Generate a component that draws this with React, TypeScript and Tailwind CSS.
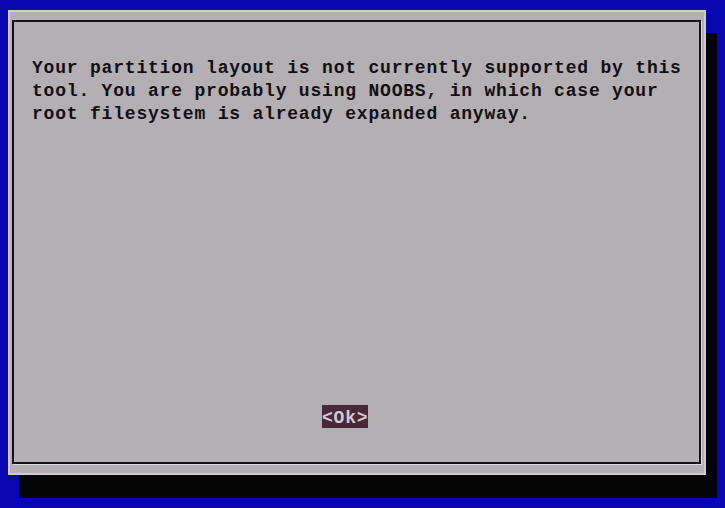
export default function App() {
  const lines = [
    "Your partition layout is not currently supported by this",
    "tool. You are probably using NOOBS, in which case your",
    "root filesystem is already expanded anyway.",
  ];

  return (
    <div className="w-[725px] h-[508px] bg-[#0808b0] pl-[8px] pt-[10px] overflow-hidden font-['Liberation_Mono',monospace] font-bold">
      <div className="w-[698px] h-[465px] bg-[#b3afb3] border-2 border-[#cfcbcf] shadow-[11px_23px_0_#050505] pl-[2px] pt-[8px]">
        <div className="w-[689px] h-[444px] border-2 border-[#151115] shadow-[1px_1px_0_#dedade] flex flex-col pl-[18px] pt-[35px]">
          <div className="text-[18px] leading-[23px] tracking-[0.8px] text-[#120e12]">
            {lines.map((l, i) => (
              <div key={i} className="whitespace-pre">
                {l}
              </div>
            ))}
          </div>
          <div className="mt-[279px] ml-[290px]">
            <span className="inline-block h-[23px] w-[46px] bg-[#4a2838] text-[#d2cad2] text-[18px] leading-[26px] tracking-[0.8px] whitespace-pre">
              {"<Ok>"}
            </span>
          </div>
        </div>
      </div>
    </div>
  );
}
